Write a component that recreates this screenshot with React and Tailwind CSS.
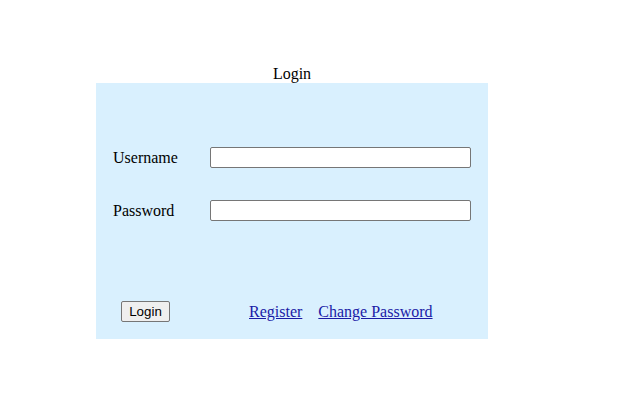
import React from 'react';

const Field = ({ label, type }) => (
	<div className="flex items-center h-[21px]">
		<span className="w-[97px] text-base leading-[21px]">{label}</span>
		<input
			type={type}
			className="w-[261px] h-[21px] bg-white border border-[#767676] rounded-[2px] px-1 text-[13px] outline-none"
		/>
	</div>
);

const App = () => {
	return (
		<div
			className="w-[640px] h-[400px] bg-white text-black pt-[64px] pl-[96px]"
			style={{ fontFamily: '"Liberation Serif", "Times New Roman", serif' }}
		>
			<div className="w-[392px] text-center text-base leading-[19px]">Login</div>
			<div className="w-[392px] h-[256px] bg-[#d9f0fe] pt-[64px] pl-[17px] flex flex-col">
				<div className="flex flex-col gap-[32px]">
					<Field label="Username" type="text" />
					<Field label="Password" type="password" />
				</div>
				<div className="flex items-center h-[21px] mt-[80px]">
					<button
						className="ml-[8px] w-[49px] h-[21px] bg-[#efefef] border border-[#767676] rounded-[2px] text-[13.33px] text-black"
						style={{ fontFamily: '"Liberation Sans", Arial, sans-serif' }}
					>
						Login
					</button>
					<div className="ml-[79px] flex gap-[16px] text-base leading-[21px]">
						<a href="#" className="text-[#1a1aa6] underline">Register</a>
						<a href="#" className="text-[#1a1aa6] underline">Change Password</a>
					</div>
				</div>
			</div>
		</div>
	);
};

export default App;
